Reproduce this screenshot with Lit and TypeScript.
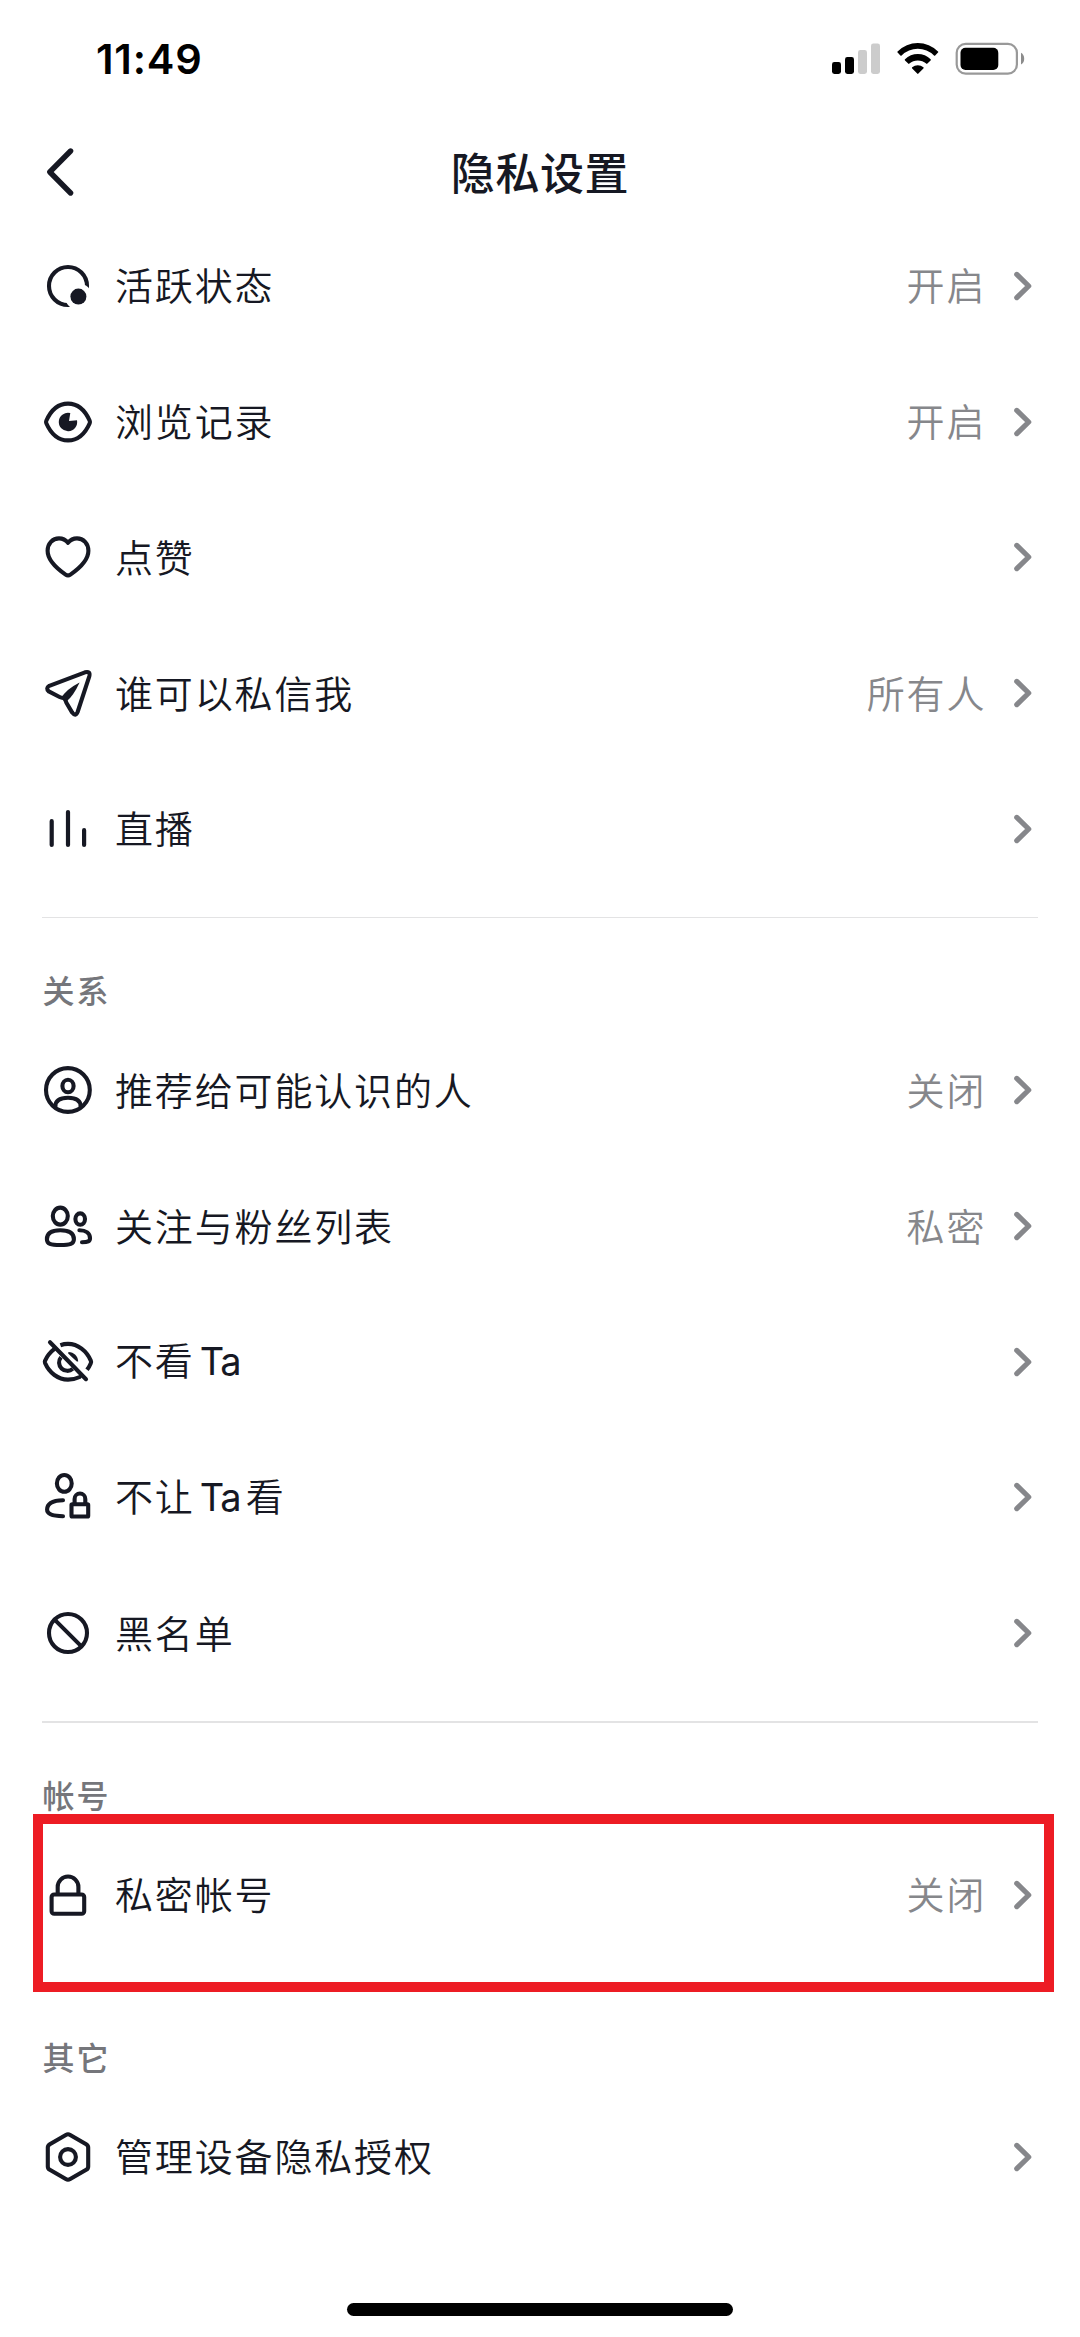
import { LitElement, html, svg, css, nothing, type SVGTemplateResult } from "lit";
import { customElement, property } from "lit/decorators.js";

interface Item {
  icon: string;
  label: string;
  value?: string;
  marked?: boolean;
}

interface Section {
  title?: string;
  divider?: boolean;
  items: Item[];
}

const SECTIONS: Section[] = [
  {
    items: [
      { icon: "status", label: "活跃状态", value: "开启" },
      { icon: "eye", label: "浏览记录", value: "开启" },
      { icon: "heart", label: "点赞" },
      { icon: "plane", label: "谁可以私信我", value: "所有人" },
      { icon: "bars", label: "直播" },
    ],
  },
  {
    title: "关系",
    divider: true,
    items: [
      { icon: "person", label: "推荐给可能认识的人", value: "关闭" },
      { icon: "people", label: "关注与粉丝列表", value: "私密" },
      { icon: "eyeOff", label: "不看 Ta" },
      { icon: "personLock", label: "不让 Ta 看" },
      { icon: "ban", label: "黑名单" },
    ],
  },
  {
    title: "帐号",
    divider: true,
    items: [{ icon: "lock", label: "私密帐号", value: "关闭", marked: true }],
  },
  {
    title: "其它",
    items: [{ icon: "hexagon", label: "管理设备隐私授权" }],
  },
];

const ICONS: Record<string, SVGTemplateResult> = {
  status: svg`
    <circle cx="27" cy="27" r="19" />
    <circle class="cut" cx="37.4" cy="37.6" r="13.4" />
    <circle class="solid" cx="37.4" cy="37.6" r="8" />`,
  eye: svg`
    <path d="M5.3 25.8C9.8 15.5 17.5 8.6 27 8.6S44.2 15.5 48.7 25.8Q49.2 27 48.7 28.2C44.2 38.5 36.5 45.4 27 45.4S9.8 38.5 5.3 28.2Q4.8 27 5.3 25.8Z" />
    <path class="solid" d="M28 25.9L29.3 18.1A9.2 9.2 0 1 0 36 25.2Z" />`,
  heart: svg`
    <path d="M27 12.8C24.6 9.8 21.6 8.4 18 8.4C11.6 8.4 6.6 13.6 6.6 20.8C6.6 29.5 15 38 24.6 44.6Q27 46.2 29.4 44.6C39 38 47.4 29.5 47.4 20.8C47.4 13.6 42.4 8.4 36 8.4C32.4 8.4 29.4 9.8 27 12.8Z" />`,
  plane: svg`
    <path d="M8.3 19.8L44 6.3Q49.6 4.8 48.3 10.3L36.6 46Q34.6 51 31.2 46.6L25.4 36.8Q24.6 33.6 22.6 31.8Q20.6 32 18.6 31L7.8 25.4Q4.4 22.2 8.3 19.8Z" />
    <path class="solid" d="M20.6 31.6Q24.5 23.6 38.6 16.4Q32.4 30 25.4 35.4Z" />`,
  bars: svg`<path class="bars" d="M10.7 19.2V43M27 10.1V43M43.1 28.2V43" />`,
  person: svg`
    <circle cx="26.9" cy="27" r="21.9" />
    <ellipse cx="27" cy="23" rx="5.6" ry="6.3" />
    <path d="M14.4 43.6C14.4 37.2 19 34.8 27 34.8S39.6 37.2 39.6 43.6" />`,
  people: svg`
    <ellipse cx="19.3" cy="17.1" rx="7.5" ry="8.5" />
    <path d="M19.3 31.3C10.2 31.3 5.9 34.6 5.9 40.2C5.9 44.8 9.4 46 19.3 46S32.9 44.8 32.9 40.2C32.9 34.6 28.4 31.3 19.3 31.3Z" />
    <ellipse cx="39.2" cy="20.1" rx="4.8" ry="5.7" />
    <path d="M38.4 31.3C45 31.3 49 34.4 49 39.2C49 42.4 47 43.2 41 43.2" />`,
  eyeOff: svg`
    <path d="M9 7.2L45 44.2" />
    <path class="butt" d="M19.4 10.2Q23 8.9 27 8.9C37 8.9 45.6 16 49.8 25.6Q50.4 26.9 49.8 28.2Q48.3 31.8 46 34.8" />
    <path d="M13.2 14.2C9 17.4 6 21.4 4 25.8Q3.6 26.9 4.1 28.1C8.4 37.8 17 44.6 27 44.6Q33.4 44.6 38.8 42" />
    <path class="butt" d="M20 22.2A8.3 8.3 0 0 0 31.8 33.8" />
    <path class="solid" d="M27.4 16.9C33 17 37 21 37.2 26.6L35.8 26.4Q31 22.6 27.2 18.6Z" />`,
  personLock: svg`
    <ellipse cx="23.3" cy="13.4" rx="7.4" ry="8.4" />
    <path d="M22 30.2C11.4 30.4 6.1 33 6.1 39.6C6.1 44.4 11 46.2 22 46.2" />
    <rect x="30.5" y="34.2" width="16.7" height="12.3" rx="0.8" />
    <path d="M33.6 34V28.9A5.35 5.35 0 0 1 44.3 28.9V34" />`,
  ban: svg`<circle cx="27" cy="27" r="19" /><path d="M13.6 13.6L40.4 40.4" />`,
  lock: svg`
    <rect x="10.6" y="26.5" width="32.6" height="19.3" rx="2.6" />
    <path d="M16.7 26V18.9A10.35 10.35 0 0 1 37.4 18.9V26" />`,
  hexagon: svg`
    <path d="M24.8 4.9Q27 3.6 29.2 4.9L45.2 14.2Q47.2 15.4 47.2 17.6V36.4Q47.2 38.6 45.2 39.8L29.2 49.1Q27 50.4 24.8 49.1L8.8 39.8Q6.8 38.6 6.8 36.4V17.6Q6.8 15.4 8.8 14.2Z" />
    <circle cx="27" cy="27" r="7.9" />`,
};

@customElement("setting-row")
class SettingRow extends LitElement {
  @property({ attribute: false }) item!: Item;

  static styles = css`
    :host {
      display: block;
    }
    .row {
      position: relative;
      display: flex;
      align-items: center;
      height: 135.7px;
      box-sizing: border-box;
      padding: 0 47.3px 0 41px;
    }
    .icon {
      flex: none;
      width: 54px;
      height: 54px;
      fill: none;
      stroke: #161823;
      stroke-width: 4.1;
      stroke-linecap: round;
      stroke-linejoin: round;
    }
    .icon .solid {
      fill: #161823;
      stroke: none;
    }
    .icon .cut {
      fill: #fff;
      stroke: none;
    }
    .icon .butt {
      stroke-linecap: butt;
    }
    .icon .bars {
      stroke-width: 4.2;
    }
    .label,
    .value {
      padding-bottom: 3px;
      font-size: 38px;
      font-weight: 350;
      line-height: 56px;
      letter-spacing: 1.85px;
      white-space: pre;
    }
    .label {
      flex: 1;
      margin-left: 20px;
      color: #161823;
      word-spacing: -5.4px;
    }
    .latin {
      font-family: Inter, sans-serif;
      font-weight: 400;
      letter-spacing: -1px;
    }
    .value {
      color: #86878b;
    }
    .arrow {
      flex: none;
      width: 20px;
      height: 32px;
      margin-left: 26.4px;
      fill: none;
      stroke: #86878b;
      stroke-width: 5.2;
      stroke-linecap: round;
      stroke-linejoin: round;
    }
    .frame {
      position: absolute;
      left: 33px;
      top: -12.4px;
      width: 1021px;
      height: 178px;
      box-sizing: border-box;
      border: 10px solid #ed1c24;
      pointer-events: none;
    }
  `;

  private renderLabel(text: string) {
    return text
      .split(/([A-Za-z]+)/)
      .filter((part) => part)
      .map((part) => (/[A-Za-z]/.test(part) ? html`<span class="latin">${part}</span>` : part));
  }

  render() {
    const { icon, label, value, marked } = this.item;
    return html`
      <div class="row">
        <svg class="icon" viewBox="0 0 54 54">${ICONS[icon]}</svg>
        <span class="label">${this.renderLabel(label)}</span>
        ${value ? html`<span class="value">${value}</span>` : nothing}
        <svg class="arrow" viewBox="0 0 20 32">
          <path d="M3.8 4.4L15.7 16L3.8 27.6" />
        </svg>
        ${marked ? html`<div class="frame"></div>` : nothing}
      </div>
    `;
  }
}

@customElement("app-root")
class AppRoot extends LitElement {
  static styles = css`
    :host {
      display: block;
      font-family: "Noto Sans CJK SC", "Noto Sans", sans-serif;
    }
    .screen {
      display: flex;
      flex-direction: column;
      width: 1080px;
      height: 2337px;
      overflow: hidden;
      background: #fff;
    }
    .status {
      flex: none;
      display: flex;
      align-items: center;
      justify-content: space-between;
      height: 118px;
      box-sizing: border-box;
      padding: 0 54px 0 96px;
    }
    .time {
      font: 600 41.5px/50px Inter, sans-serif;
      letter-spacing: 0.8px;
      color: #000;
    }
    .indicators {
      width: 194px;
      height: 34px;
    }
    .nav {
      flex: none;
      display: grid;
      grid-template-columns: 120px 1fr 120px;
      align-items: center;
      height: 100.15px;
      box-sizing: border-box;
      padding-top: 8px;
    }
    .back {
      width: 34px;
      height: 52px;
      margin-left: 43px;
      fill: none;
      stroke: #161823;
      stroke-width: 5.4;
      stroke-linecap: round;
      stroke-linejoin: round;
    }
    .title {
      margin: 0;
      padding-bottom: 3px;
      text-align: center;
      font-size: 44px;
      font-weight: 500;
      line-height: 64px;
      letter-spacing: 0.6px;
      color: #161823;
    }
    .list {
      flex: 1;
    }
    .divider {
      height: 1.6px;
      margin: 20.3px 42px 39px;
      background: #e3e3e4;
    }
    .spacer {
      height: 61.3px;
    }
    .heading {
      margin: 0;
      padding-left: 42.5px;
      font-size: 32px;
      font-weight: 500;
      line-height: 65px;
      letter-spacing: 1.9px;
      color: #75767b;
    }
    .home {
      flex: none;
      display: flex;
      justify-content: center;
      height: 34px;
    }
    .home-bar {
      width: 386px;
      height: 13px;
      border-radius: 6.5px;
      background: #000;
    }
  `;

  render() {
    return html`
      <div class="screen">
        <header class="status">
          <span class="time">11:49</span>
          <svg class="indicators" viewBox="832 42 194 34">
            <rect x="832" y="62" width="9" height="12" rx="2.4" />
            <rect x="845" y="57" width="9" height="17" rx="2.4" />
            <rect x="858" y="50" width="9" height="24" rx="2.4" fill="#ccc" />
            <rect x="871" y="43.4" width="9" height="30.6" rx="2.4" fill="#ccc" />
            <path d="M897.6 51.4A28.4 28.4 0 0 1 938 51.4Q938.6 52 938 52.6L935.2 55.4Q934.6 56 934 55.4A23 23 0 0 0 901.6 55.4Q901 56 900.4 55.4L897.6 52.6Q897 52 897.6 51.4Z" />
            <path d="M905 59.2A18.2 18.2 0 0 1 930.6 59.2Q931.2 59.8 930.6 60.4L927.4 63.6Q926.8 64.2 926.2 63.6A12.6 12.6 0 0 0 909.4 63.6Q908.8 64.2 908.2 63.6L905 60.4Q904.4 59.8 905 59.2Z" />
            <path d="M912.2 67.2A8.6 8.6 0 0 1 923.4 67.2Q924 67.8 923.4 68.4L918.4 73.6Q917.8 74.2 917.2 73.6L912.2 68.4Q911.6 67.8 912.2 67.2Z" />
            <rect x="956.7" y="43.8" width="60.2" height="29.8" rx="9" fill="none" stroke="#999" stroke-width="2.2" />
            <rect x="960.5" y="47.7" width="37.8" height="22.2" rx="5" />
            <path d="M1021 52.8Q1024.2 54.6 1024.2 58.7T1021 64.6Z" fill="#8c8c8c" />
          </svg>
        </header>
        <nav class="nav">
          <svg class="back" viewBox="0 0 34 52">
            <path d="M27.6 5L6.8 26L27.6 47" />
          </svg>
          <h1 class="title">隐私设置</h1>
        </nav>
        <main class="list">
          ${SECTIONS.map(
            (section, index) => html`
              ${section.divider ? html`<div class="divider"></div>` : index > 0 ? html`<div class="spacer"></div>` : nothing}
              ${section.title ? html`<h2 class="heading">${section.title}</h2>` : nothing}
              ${section.items.map((item) => html`<setting-row .item=${item}></setting-row>`)}
            `,
          )}
        </main>
        <footer class="home"><div class="home-bar"></div></footer>
      </div>
    `;
  }
}
